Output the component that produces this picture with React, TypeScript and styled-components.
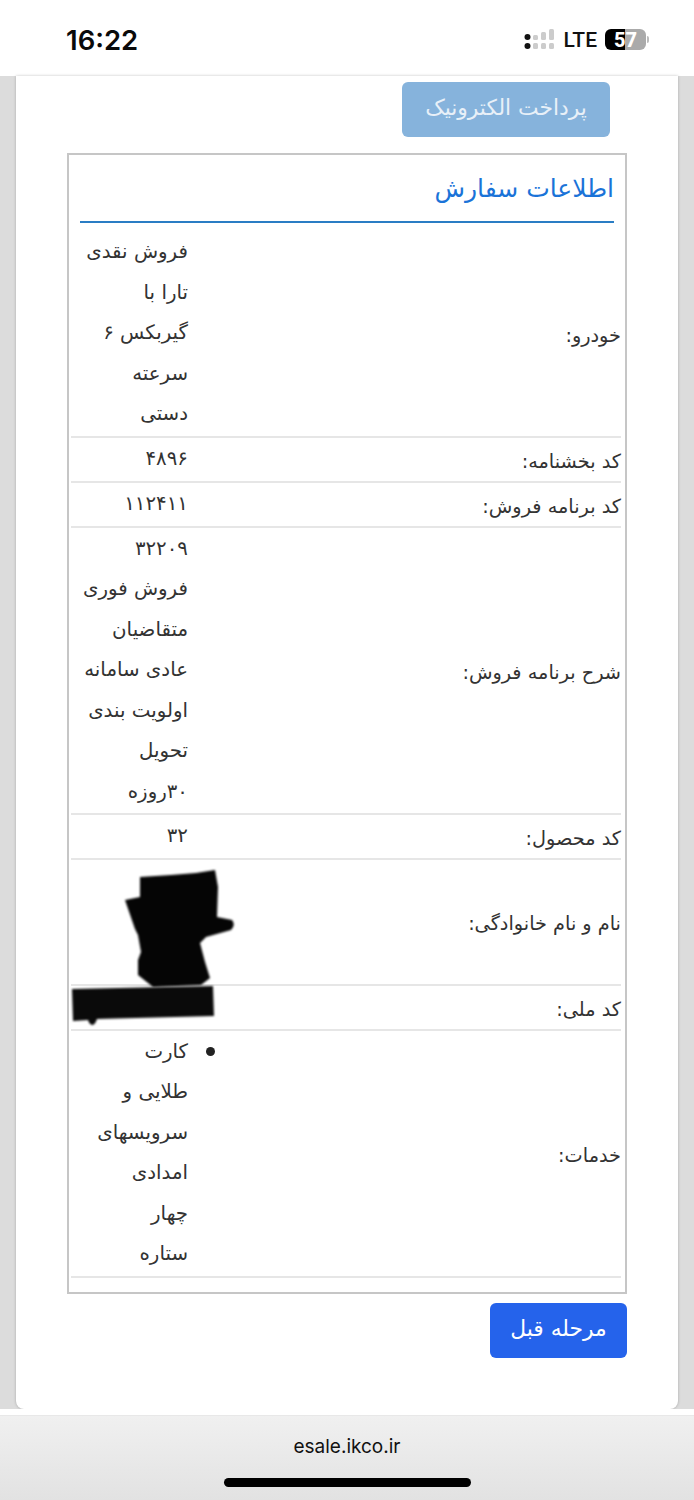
import styled, { createGlobalStyle } from "styled-components"

const GlobalStyle = createGlobalStyle`
html, body {
  margin: 0;
  padding: 0;
  background: #fff;
}
`

const Page = styled.div`
width: 694px;
height: 1500px;
display: flex;
flex-direction: column;
overflow: hidden;
background: #fff;
font-family: "DejaVu Sans", sans-serif;
`

const StatusBar = styled.div`
height: 76px;
flex: none;
display: flex;
align-items: center;
justify-content: space-between;
padding: 3px 45px 0 66px;
box-sizing: border-box;
background: #fff;
`

const Clock = styled.span`
font-family: Inter, sans-serif;
font-size: 27.5px;
font-weight: 600;
color: #0a0a0a;
`

const StatusIcons = styled.div`
display: flex;
align-items: center;
gap: 6px;
`

const Lte = styled.span`
font-family: Roboto, sans-serif;
font-size: 21px;
font-weight: 500;
margin-right: 2px;
color: #111;
`

const Battery = styled.div`
width: 41px;
height: 21px;
border-radius: 6px;
overflow: hidden;
display: flex;
align-items: center;
justify-content: center;
background: linear-gradient(to right, #000 0 50%, #aaa 50% 100%);
font-family: Roboto, sans-serif;
font-size: 20px;
font-weight: 800;
color: #fff;
`

const BatteryCap = styled.span`
width: 2px;
height: 7px;
margin-left: -5px;
border-radius: 0 2px 2px 0;
background: #bbb;
`

const Main = styled.main`
height: 1333px;
flex: none;
padding: 0 16px;
box-sizing: border-box;
background: #dcdcdc;
`

const Card = styled.div`
height: 100%;
padding: 6px 51px 0;
box-sizing: border-box;
direction: rtl;
background: #fff;
border-radius: 0 0 8px 8px;
box-shadow: 0 0 3px rgba(0, 0, 0, 0.25);
`

const Button = styled.button<{ $faded?: boolean }>`
display: block;
height: 55px;
padding: 0 0 4px;
border: none;
border-radius: 6px;
font-family: "DejaVu Sans", sans-serif;
font-size: 21.8px;
color: ${(p) => (p.$faded ? "#e8f0f8" : "#fff")};
background: ${(p) => (p.$faded ? "#86b3dc" : "#2563eb")};
`

const PayButton = styled(Button)`
width: 208px;
margin-right: 17px;
`

const BackButton = styled(Button)`
width: 137px;
margin-top: 9px;
`

const OrderBox = styled.section`
position: relative;
margin-top: 16px;
height: 1141px;
padding: 0 4px 0 2px;
box-sizing: border-box;
border: 2px solid #c6c6c6;
`

const Title = styled.h2`
height: 68px;
margin: 0 7px 0 9px;
box-sizing: border-box;
padding-top: 11px;
font-size: 25px;
line-height: 46px;
font-weight: 400;
color: #1a73d8;
border-bottom: 2px solid #2a7dc4;
`

const Rows = styled.div`
margin-top: 8px;
`

const Row = styled.div`
display: grid;
grid-template-columns: 1fr 117px;
align-items: center;
min-height: 45px;
box-sizing: border-box;
padding: 1px 0;
border-bottom: 2px solid #e6e6e6;
font-size: 19.8px;
line-height: 40.5px;
color: #333;
`

const Label = styled.span`
padding-top: 5px;
font-size: 19.3px;
line-height: 34px;
white-space: nowrap;
`

const Value = styled.div`
white-space: nowrap;
`

const ValueLine = styled.div`
position: relative;
`

const Bullet = styled.span`
position: absolute;
top: 15px;
right: -27px;
width: 9px;
height: 9px;
border-radius: 50%;
background: #222;
`

const Redaction = styled.svg`
position: absolute;
left: 2px;
top: 712px;
overflow: visible;
`

const Gap = styled.div`
height: 6px;
flex: none;
background: #fff;
`

const AddressBar = styled.footer`
flex: 1;
position: relative;
display: flex;
justify-content: center;
padding-top: 19px;
background: linear-gradient(#f0f0f0, #e2e2e2);
border-top: 1px solid #e8e8e8;
`

const Domain = styled.span`
font-family: Inter, sans-serif;
font-size: 19px;
line-height: 24px;
color: #111;
`

const HomeIndicator = styled.span`
position: absolute;
left: 224px;
bottom: 13px;
width: 247px;
height: 9px;
border-radius: 5px;
background: #000;
`

type OrderRow = { label: string; lines: string[]; service?: boolean }

// the name and id cells stay empty, the reference has them blacked out
const orderRows: OrderRow[] = [
    { label: "خودرو:", lines: ["فروش نقدی", "تارا با", "گیربکس ۶", "سرعته", "دستی"] },
    { label: "کد بخشنامه:", lines: ["۴۸۹۶"] },
    { label: "کد برنامه فروش:", lines: ["۱۱۲۴۱۱"] },
    {
        label: "شرح برنامه فروش:",
        lines: ["۳۲۲۰۹", "فروش فوری", "متقاضیان", "عادی سامانه", "اولویت بندی", "تحویل", "۳۰روزه"],
    },
    { label: "کد محصول:", lines: ["۳۲"] },
    { label: "نام و نام خانوادگی:", lines: ["\u00a0", "\u00a0", "\u00a0"] },
    { label: "کد ملی:", lines: ["\u00a0"] },
    {
        label: "خدمات:",
        lines: ["کارت", "طلایی و", "سرویسهای", "امدادی", "چهار", "ستاره"],
        service: true,
    },
]

const SignalIcon = () => (
    <svg width="34" height="22" viewBox="0 0 34 22">
        <circle cx="3.5" cy="8" r="3" fill="#111" />
        <circle cx="3.5" cy="17" r="3" fill="#111" />
        <rect x="9" y="6" width="5" height="5" rx="1.5" fill="#ccc" />
        <rect x="9" y="14" width="5" height="6" rx="1.5" fill="#ccc" />
        <rect x="17" y="3" width="5" height="8" rx="1.5" fill="#ccc" />
        <rect x="17" y="14" width="5" height="6" rx="1.5" fill="#ccc" />
        <rect x="25" y="0" width="5" height="11" rx="1.5" fill="#ccc" />
        <rect x="25" y="14" width="5" height="6" rx="1.5" fill="#ccc" />
    </svg>
)

const Scribble = () => (
    <Redaction width="170" height="160" viewBox="0 0 170 160">
        <path
            d="M69 10 L100 8 L125 6 L144 3 L147 20 L146 50 L161 53 Q165 58 160 63 L135 70 L129 76 L134 95 L139 111 L130 118 L82 120 L72 112 L67 108 L67 93 L70 85 L67 68 L64 62 L54 33 L69 30 Z"
            fill="#050505"
            filter="blur(1px)"
        />
        <path
            d="M1 122 L142 119 L143 149 L26 152 Q24 158 21 158 Q18 157 17 153 L2 154 Z"
            fill="#0a0a0a"
            filter="blur(1px)"
        />
    </Redaction>
)

export default function App() {
    return (
        <Page>
            <GlobalStyle />
            <StatusBar>
                <Clock>16:22</Clock>
                <StatusIcons>
                    <SignalIcon />
                    <Lte>LTE</Lte>
                    <Battery>57</Battery>
                    <BatteryCap />
                </StatusIcons>
            </StatusBar>
            <Main>
                <Card>
                    <PayButton $faded>پرداخت الکترونیک</PayButton>
                    <OrderBox>
                        <Title>اطلاعات سفارش</Title>
                        <Rows>
                            {orderRows.map((row) => (
                                <Row key={row.label}>
                                    <Label>{row.label}</Label>
                                    <Value>
                                        {row.lines.map((line, i) => (
                                            <ValueLine key={i}>
                                                {row.service && i === 0 && <Bullet />}
                                                {line}
                                            </ValueLine>
                                        ))}
                                    </Value>
                                </Row>
                            ))}
                        </Rows>
                        <Scribble />
                    </OrderBox>
                    <BackButton>مرحله قبل</BackButton>
                </Card>
            </Main>
            <Gap />
            <AddressBar>
                <Domain>esale.ikco.ir</Domain>
                <HomeIndicator />
            </AddressBar>
        </Page>
    )
}
